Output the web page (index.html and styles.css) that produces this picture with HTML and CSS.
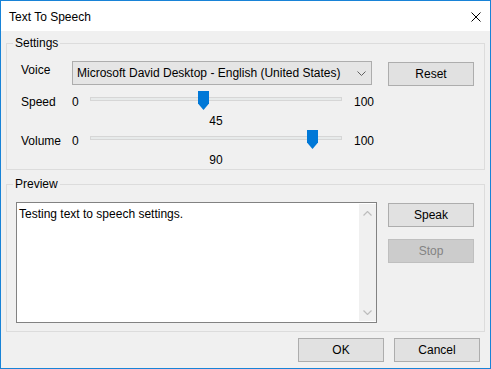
FILE: index.html
```html
<!DOCTYPE html>
<html>
<head>
<meta charset="utf-8">
<title>Text To Speech</title>
<link rel="stylesheet" href="styles.css">
</head>
<body>
<div class="window">
  <div class="titlebar">
    <span class="title">Text To Speech</span>
    <svg class="close" width="10" height="10" viewBox="0 0 10 10"><path d="M0.5 0.5 L9.5 9.5 M9.5 0.5 L0.5 9.5" stroke="#000" stroke-width="1" fill="none"/></svg>
  </div>
  <div class="content">
    <fieldset class="group settings">
      <legend>Settings</legend>
      <div class="settings-grid">
        <span class="lbl lbl-name lbl-voice">Voice</span>
        <div class="combo">
          <span class="combo-text">Microsoft David Desktop - English (United States)</span>
          <svg class="combo-arrow" width="9" height="5" viewBox="0 0 9 5"><path d="M0.5 0.5 L4.5 4.5 L8.5 0.5" stroke="#606060" stroke-width="1" fill="none"/></svg>
        </div>
        <div class="btn btn-reset">Reset</div>

        <span class="lbl lbl-name lbl-row">Speed</span>
        <span class="lbl lbl-min lbl-row">0</span>
        <div class="slider">
          <div class="track"></div>
          <svg class="thumb" style="left: 108px" width="11" height="19" viewBox="0 0 11 19"><polygon points="0,0 11,0 11,12.5 5.5,19 0,12.5" fill="#0078d7"/></svg>
        </div>
        <span class="lbl lbl-row lbl-max">100</span>

        <span class="val">45</span>

        <span class="lbl lbl-name lbl-row">Volume</span>
        <span class="lbl lbl-min lbl-row">0</span>
        <div class="slider">
          <div class="track"></div>
          <svg class="thumb" style="left: 217px" width="11" height="19" viewBox="0 0 11 19"><polygon points="0,0 11,0 11,12.5 5.5,19 0,12.5" fill="#0078d7"/></svg>
        </div>
        <span class="lbl lbl-row lbl-max">100</span>

        <span class="val">90</span>
      </div>
    </fieldset>

    <fieldset class="group preview">
      <legend>Preview</legend>
      <div class="preview-row">
        <div class="textarea">
          <div class="ta-text">Testing text to speech settings.</div>
          <div class="scrollbar">
            <svg width="9" height="5" viewBox="0 0 9 5"><path d="M0.5 4.5 L4.5 0.5 L8.5 4.5" stroke="#bdbdbd" stroke-width="1.2" fill="none"/></svg>
            <svg width="9" height="5" viewBox="0 0 9 5"><path d="M0.5 0.5 L4.5 4.5 L8.5 0.5" stroke="#bdbdbd" stroke-width="1.2" fill="none"/></svg>
          </div>
        </div>
        <div class="btn-col">
          <div class="btn">Speak</div>
          <div class="btn btn-disabled">Stop</div>
        </div>
      </div>
    </fieldset>

    <div class="footer">
      <div class="btn">OK</div>
      <div class="btn">Cancel</div>
    </div>
  </div>
</div>
</body>
</html>
```

FILE: styles.css
```css
* { box-sizing: border-box; }

html, body {
  margin: 0;
  padding: 0;
  background: #f0f0f0;
}

body {
  font-family: "Segoe UI", "Liberation Sans", Arial, sans-serif;
  font-size: 12px;
  line-height: 16px;
  color: #000;
}

.window {
  width: 491px;
  height: 369px;
  border: 1px solid #1883d7;
  background: #f0f0f0;
  display: flex;
  flex-direction: column;
  overflow: hidden;
}

.titlebar {
  height: 30px;
  background: #fff;
  display: flex;
  align-items: center;
  justify-content: space-between;
  padding: 0 9px 0 8px;
  flex: none;
}

.title {
  font-size: 12px;
  margin-top: 1px;
}

.close {
  display: block;
  margin-top: 2px;
}

.content {
  flex: 1;
  padding: 4px 5px 0 5px;
  display: flex;
  flex-direction: column;
}

.group {
  margin: 0;
  padding: 0;
  border: 1px solid #dcdcdc;
  min-width: 0;
}

.group legend {
  margin-left: 6px;
  padding: 0 2px;
  line-height: 16px;
}

.settings-grid {
  display: grid;
  margin: 10px 0 1px 14px;
  grid-template-columns: 51px 18px 252px 30px 16px 86px;
  grid-template-rows: 30px 22px 17px 22px 16px;
  align-items: start;
}

.lbl-name {
  grid-column: 1;
}

.lbl-min {
  grid-column: 2;
}

.lbl-voice {
  margin-top: 1px;
}

.combo {
  grid-column: 2 / 5;
  height: 24px;
  background: #e5e5e5;
  border: 1px solid #adadad;
  display: flex;
  align-items: center;
  justify-content: space-between;
  padding: 0 5px 0 4px;
}

.combo-text {
  white-space: nowrap;
}

.combo-arrow {
  display: block;
  margin-top: 1px;
}

.btn {
  width: 86px;
  height: 24px;
  background: #e1e1e1;
  border: 1px solid #adadad;
  display: flex;
  align-items: center;
  justify-content: center;
}

.btn-reset {
  grid-column: 6;
  margin-top: 1px;
}

.btn-disabled {
  background: #cccccc;
  border-color: #bfbfbf;
  color: #838383;
}

.lbl-row {
  margin-top: 3px;
}

.slider {
  grid-column: 3;
  position: relative;
  height: 20px;
}

.lbl-max {
  grid-column: 4 / 6;
  padding-left: 12px;
}

.track {
  position: absolute;
  left: 0;
  right: 0;
  top: 6px;
  height: 4px;
  background: #e7eaea;
  border: 1px solid #d6d6d6;
}

.thumb {
  position: absolute;
  top: 0;
  display: block;
}

.val {
  grid-column: 3;
  text-align: center;
}

.preview {
  margin-top: 6px;
}

.preview-row {
  display: flex;
  align-items: flex-start;
  margin: 10px 0 8px 9px;
  gap: 11px;
}

.textarea {
  width: 361px;
  height: 121px;
  background: #fff;
  border: 1px solid #828282;
  display: flex;
  justify-content: space-between;
}

.ta-text {
  padding: 3px 0 0 2px;
}

.scrollbar {
  width: 17px;
  margin: 1px 0;
  background: #f0f0f0;
  display: flex;
  flex-direction: column;
  justify-content: space-between;
  align-items: center;
  padding: 7px 0 6px;
}

.scrollbar svg {
  display: block;
}

.btn-col {
  display: flex;
  flex-direction: column;
  gap: 12px;
  margin-top: 1px;
}

.footer {
  display: flex;
  justify-content: flex-end;
  gap: 10px;
  margin-top: 6px;
  padding-right: 5px;
}
```
